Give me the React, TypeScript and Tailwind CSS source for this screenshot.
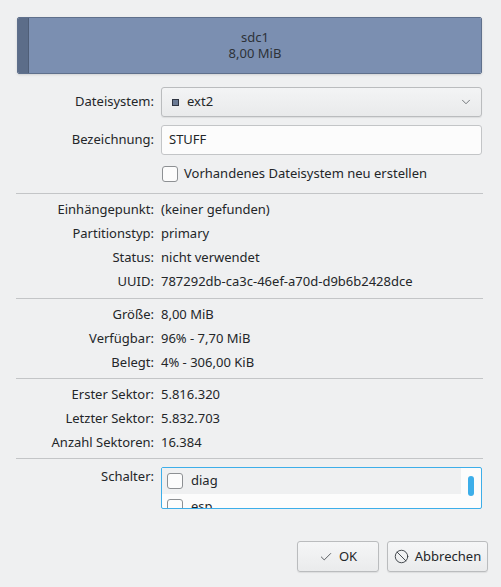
import { Ban, Check, ChevronDown } from "lucide-react";

function Row({ label, value }: { label: string; value: string }) {
	return (
		<div className="flex h-[24px] items-center">
			<div className="w-[145px] text-right pr-[7px]">{label}</div>
			<div className="flex-1">{value}</div>
		</div>
	);
}

function Box({ className = "" }: { className?: string }) {
	return <span className={"block shrink-0 w-[16px] h-[16px] rounded-[3px] border border-[#8d9093] bg-[#fcfcfc] " + className}></span>;
}

function Separator({ className = "" }: { className?: string }) {
	return <div className={"h-px bg-[#c3c5c7] ml-[16px] w-[467px] " + className}></div>;
}

export default function App() {
	return (
		<div className="w-[501px] h-[587px] bg-[#eff0f1] text-[#232629] text-[13px] font-['Noto_Sans',sans-serif] flex flex-col overflow-hidden">
			{/* partition bar */}
			<div className="mt-[17px] ml-[17px] w-[465px] h-[57px] flex rounded-[2px] border border-[#5f708c] overflow-hidden shadow-sm">
				<div className="w-[11px] bg-[#5c6d89] border-r border-[#4f5e77]"></div>
				<div className="flex-1 bg-[#7b8fb1] flex flex-col items-center justify-center gap-[1px] leading-[15px] text-[13px] text-[#2d3238]">
					<span>sdc1</span>
					<span>8,00 MiB</span>
				</div>
			</div>

			{/* file system */}
			<div className="flex items-center mt-[13px] h-[30px] pl-[16px]">
				<div className="w-[145px] text-right pr-[7px]">Dateisystem:</div>
				<div className="w-[321px] h-[30px] flex items-center rounded-[3px] border border-[#babcbe] bg-gradient-to-b from-[#f3f4f5] to-[#e9eaeb] shadow-[0_1px_1px_rgba(0,0,0,0.08)] pl-[10px] pr-[8px]">
					<span className="w-[7px] h-[7px] bg-[#6b7a94] border border-[#2f3542]"></span>
					<span className="ml-[8px] flex-1">ext2</span>
					<ChevronDown size={14} strokeWidth={1.3} className="text-[#4d5257]" />
				</div>
			</div>

			{/* label */}
			<div className="flex items-center mt-[8px] h-[30px] pl-[16px]">
				<div className="w-[145px] text-right pr-[7px]">Bezeichnung:</div>
				<div className="w-[321px] h-[30px] flex items-center rounded-[3px] border border-[#c3c5c7] bg-[#fcfcfc] pl-[7px]">STUFF</div>
			</div>

			{/* recreate checkbox */}
			<div className="flex items-center mt-[10px] h-[18px] pl-[162px]">
				<Box />
				<span className="ml-[6px]">Vorhandenes Dateisystem neu erstellen</span>
			</div>

			<Separator className="mt-[10px]" />
			<div className="mt-[4px] pl-[16px]">
				<Row label="Einhängepunkt:" value="(keiner gefunden)" />
				<Row label="Partitionstyp:" value="primary" />
				<Row label="Status:" value="nicht verwendet" />
				<Row label="UUID:" value="787292db-ca3c-46ef-a70d-d9b6b2428dce" />
			</div>

			<Separator className="mt-[4px]" />
			<div className="mt-[4px] pl-[16px]">
				<Row label="Größe:" value="8,00 MiB" />
				<Row label="Verfügbar:" value="96% - 7,70 MiB" />
				<Row label="Belegt:" value="4% - 306,00 KiB" />
			</div>

			<Separator className="mt-[3px]" />
			<div className="mt-[4px] pl-[16px]">
				<Row label="Erster Sektor:" value="5.816.320" />
				<Row label="Letzter Sektor:" value="5.832.703" />
				<Row label="Anzahl Sektoren:" value="16.384" />
			</div>

			<Separator className="mt-[3px]" />

			{/* flags */}
			<div className="flex mt-[8px] pl-[16px]">
				<div className="w-[145px] text-right pr-[7px] leading-[18px]">Schalter:</div>
				<div className="w-[321px] h-[42px] rounded-[2px] border border-[#3daee9] bg-[#fcfcfc] flex overflow-hidden">
					<div className="flex-1 flex flex-col">
						<div className="h-[26px] shrink-0 bg-[#eff0f1] flex items-center pl-[5px]">
							<Box />
							<span className="ml-[8px]">diag</span>
						</div>
						<div className="h-[26px] shrink-0 flex items-center pl-[5px]">
							<Box />
							<span className="ml-[8px]">esp</span>
						</div>
					</div>
					<div className="w-[20px] flex justify-center pt-[8px]">
						<span className="block w-[6px] h-[20px] rounded-full bg-[#3daee9]"></span>
					</div>
				</div>
			</div>

			{/* buttons */}
			<div className="flex justify-end gap-[8px] mt-[32px] pr-[13px]">
				<button className="w-[82px] h-[31px] flex items-center justify-center gap-[6px] rounded-[3px] border border-[#babcbe] bg-gradient-to-b from-[#f5f6f7] to-[#eaebec] shadow-[0_1px_1px_rgba(0,0,0,0.08)]">
					<Check size={14} strokeWidth={1.4} className="text-[#3b4045]" />
					<span>OK</span>
				</button>
				<button className="w-[101px] h-[31px] flex items-center justify-center gap-[6px] rounded-[3px] border border-[#babcbe] bg-gradient-to-b from-[#f5f6f7] to-[#eaebec] shadow-[0_1px_1px_rgba(0,0,0,0.08)]">
					<Ban size={15} strokeWidth={1.5} className="text-[#3b4045]" />
					<span>Abbrechen</span>
				</button>
			</div>
		</div>
	);
}
